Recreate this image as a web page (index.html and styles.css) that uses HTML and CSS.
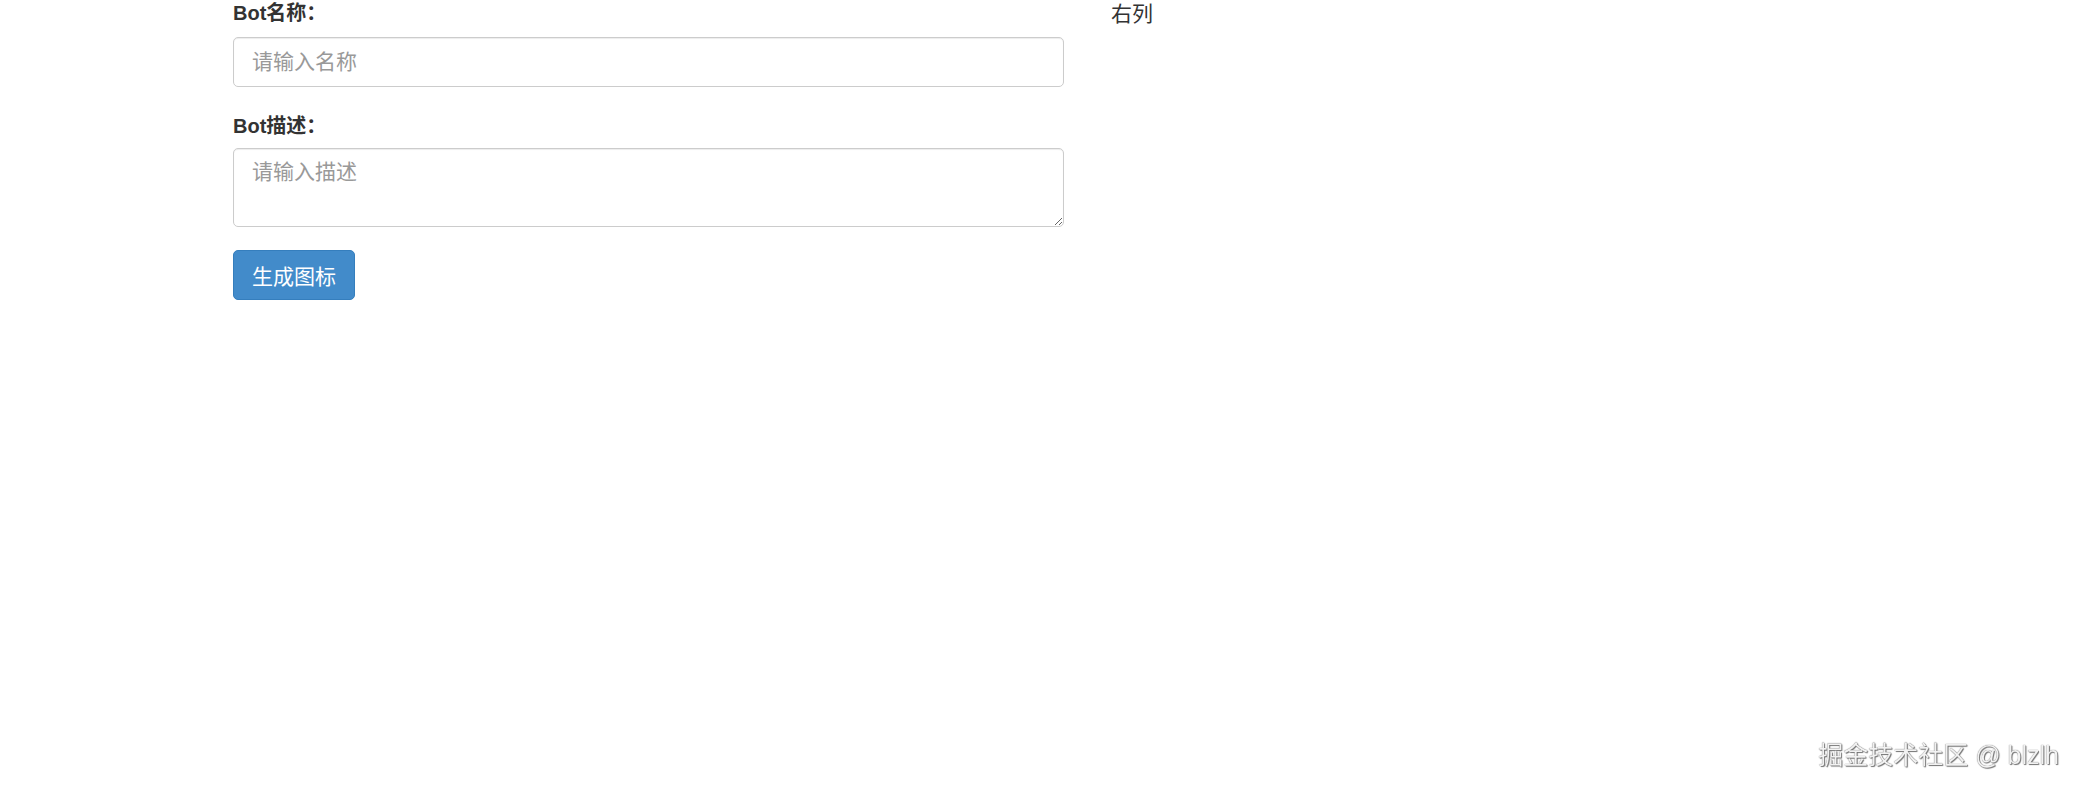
FILE: index.html
```html
<!DOCTYPE html>
<html lang="zh-CN">
<head>
<meta charset="utf-8">
<title>Bot</title>
<link rel="stylesheet" href="styles.css">
</head>
<body>
<div class="page">
  <div class="col-left">
    <div class="form-group">
      <label class="label" for="name">Bot名称：</label>
      <input class="field" id="name" type="text" placeholder="请输入名称">
    </div>
    <div class="form-group">
      <label class="label" for="desc">Bot描述：</label>
      <textarea class="field area" id="desc" placeholder="请输入描述"></textarea>
    </div>
    <button class="btn" type="button">生成图标</button>
  </div>
  <div class="col-right">右列</div>
</div>
<div class="watermark">掘金技术社区 @ blzlh</div>
</body>
</html>
```

FILE: styles.css
```css
html, body {
  margin: 0;
  padding: 0;
  background: #fff;
}
body {
  font-family: "Liberation Sans", Arial, "Noto Sans CJK SC", sans-serif;
  color: #333;
  font-size: 19px;
}
.page {
  display: flex;
  gap: 47px;
  padding-left: 233px;
}
.col-left {
  width: 831px;
  display: flex;
  flex-direction: column;
  align-items: flex-start;
}
.col-right {
  font-size: 21px;
  line-height: 27px;
}
.form-group {
  width: 100%;
  display: flex;
  flex-direction: column;
  margin-bottom: 26px;
}
.form-group + .form-group {
  margin-bottom: 23px;
}
.label {
  font-weight: bold;
  font-size: 20px;
  line-height: 27px;
  margin-bottom: 10px;
}
.form-group + .form-group .label {
  margin-bottom: 8px;
}
.field {
  box-sizing: border-box;
  width: 100%;
  height: 50px;
  border: 1px solid #ccc;
  border-radius: 5px;
  padding: 8px 18px;
  font-family: "Liberation Sans", Arial, "Noto Sans CJK SC", sans-serif;
  font-size: 21px;
  color: #555;
  background: #fff;
  box-shadow: inset 0 1px 1px rgba(0,0,0,0.075);
  outline: none;
}
.field::placeholder {
  color: #999;
}
.area {
  height: 79px;
  padding-top: 8px;
  line-height: 30px;
  resize: vertical;
  display: block;
}
.btn {
  box-sizing: border-box;
  height: 50px;
  padding: 0 18px;
  font-family: "Liberation Sans", Arial, "Noto Sans CJK SC", sans-serif;
  font-size: 21px;
  color: #fff;
  background: #428bca;
  border: 1px solid #357ebd;
  border-radius: 5px;
  cursor: pointer;
}
.watermark {
  position: fixed;
  right: 24px;
  bottom: 20px;
  font-family: "Liberation Sans", Arial, "Noto Sans CJK SC", sans-serif;
  font-size: 25px;
  color: #f2f2f2;
  text-shadow: 0 0 1px #444, 1px 1px 1px #777;
  white-space: nowrap;
}
```
